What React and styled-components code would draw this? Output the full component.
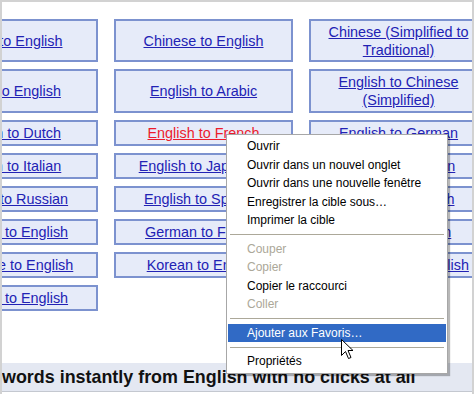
import React from "react";
import styled, { createGlobalStyle } from "styled-components";

const Global = createGlobalStyle`
  html, body {
    margin: 0;
    padding: 0;
    width: 474px;
    height: 394px;
    overflow: hidden;
    background: #d4d4d4;
  }
`;

const Frame = styled.div`
  position: relative;
  width: 474px;
  height: 394px;
  box-sizing: border-box;
  padding: 2px 2px 0 2px;
  background: #d2d2d2;
`;

const Page = styled.div`
  width: 470px;
  height: 392px;
  background: #ffffff;
  overflow: hidden;
  display: flex;
  flex-direction: column;
`;

const Grid = styled.div`
  display: grid;
  grid-template-columns: repeat(3, 179px);
  grid-template-rows: 43px 44px repeat(6, 26px);
  column-gap: 16px;
  row-gap: 7px;
  margin: 17px 0 0 -83px;
`;

const Cell = styled.div`
  box-sizing: border-box;
  border: 2px solid #7c92cf;
  background: #e6ebf9;
  display: flex;
  align-items: center;
  justify-content: center;
  text-align: center;
  padding: 0 4px;
`;

const Lang = styled.a`
  font-family: "Liberation Sans", Arial, sans-serif;
  font-size: 14.4px;
  line-height: 18px;
  color: ${(p) => (p.$hover ? "#ec1c2c" : "#2222b4")};
  text-decoration: underline;
  cursor: pointer;
`;

const Band = styled.div`
  margin-top: 52px;
  height: 28px;
  background: #e4e8f2;
  border-bottom: 1px solid #c4c8d0;
  display: flex;
  align-items: center;
  padding-left: 0;
  font-family: "Liberation Sans", Arial, sans-serif;
  font-weight: bold;
  font-size: 17.9px;
  color: #111111;
  white-space: nowrap;
`;

const Menu = styled.div`
  position: absolute;
  left: 226px;
  top: 134px;
  width: 222px;
  box-sizing: border-box;
  background: #ffffff;
  border: 1px solid #a7a7a7;
  box-shadow: 2px 2px 1px rgba(0, 0, 0, 0.28);
  padding: 2px 1px;
  font-family: "Liberation Sans", Arial, sans-serif;
  font-size: 12px;
`;

const Item = styled.div`
  height: 18.5px;
  line-height: 18.5px;
  padding-left: 19px;
  color: ${(p) => (p.$disabled ? "#aca899" : p.$active ? "#ffffff" : "#000000")};
  background: ${(p) => (p.$active ? "#316ac5" : "transparent")};
  white-space: nowrap;
`;

const Sep = styled.div`
  height: 1px;
  background: #aca899;
  margin: 4.5px 2px;
`;

const Cursor = styled.svg`
  position: absolute;
  left: 341px;
  top: 339px;
`;

const rows = [
  ["Arabic to English", "Chinese to English", "Chinese (Simplified to Traditional)"],
  ["Dutch to English", "English to Arabic", "English to Chinese (Simplified)"],
  ["English to Dutch", "English to French", "English to German"],
  ["English to Italian", "English to Japanese", "English to Korean"],
  ["English to Russian", "English to Spanish", "French to English"],
  ["German to English", "German to French", "Italian to English"],
  ["Japanese to English", "Korean to English", "Portuguese to English"],
  ["Russian to English"],
];

export default function App() {
  return (
    <>
      <Global />
      <Frame>
        <Page>
          <Grid>
            {rows.map((row, r) =>
              row.map((label, c) => (
                <Cell key={r + "-" + c}>
                  <Lang $hover={label === "English to French"}>{label}</Lang>
                </Cell>
              ))
            )}
          </Grid>
          <Band>words instantly from English with no clicks at all</Band>
        </Page>

        <Menu>
          <Item>Ouvrir</Item>
          <Item>Ouvrir dans un nouvel onglet</Item>
          <Item>Ouvrir dans une nouvelle fenêtre</Item>
          <Item>Enregistrer la cible sous…</Item>
          <Item>Imprimer la cible</Item>
          <Sep />
          <Item $disabled>Couper</Item>
          <Item $disabled>Copier</Item>
          <Item>Copier le raccourci</Item>
          <Item $disabled>Coller</Item>
          <Sep />
          <Item $active>Ajouter aux Favoris…</Item>
          <Sep />
          <Item>Propriétés</Item>
        </Menu>

        <Cursor width="14" height="21" viewBox="0 0 14 21">
          <path
            d="M0.5 0.5 L0.5 16.5 L4.5 12.5 L7.5 19.5 L10 18.5 L7 11.5 L12 11.5 Z"
            fill="#ffffff"
            stroke="#000000"
            strokeWidth="1"
            strokeLinejoin="miter"
          />
        </Cursor>
      </Frame>
    </>
  );
}
